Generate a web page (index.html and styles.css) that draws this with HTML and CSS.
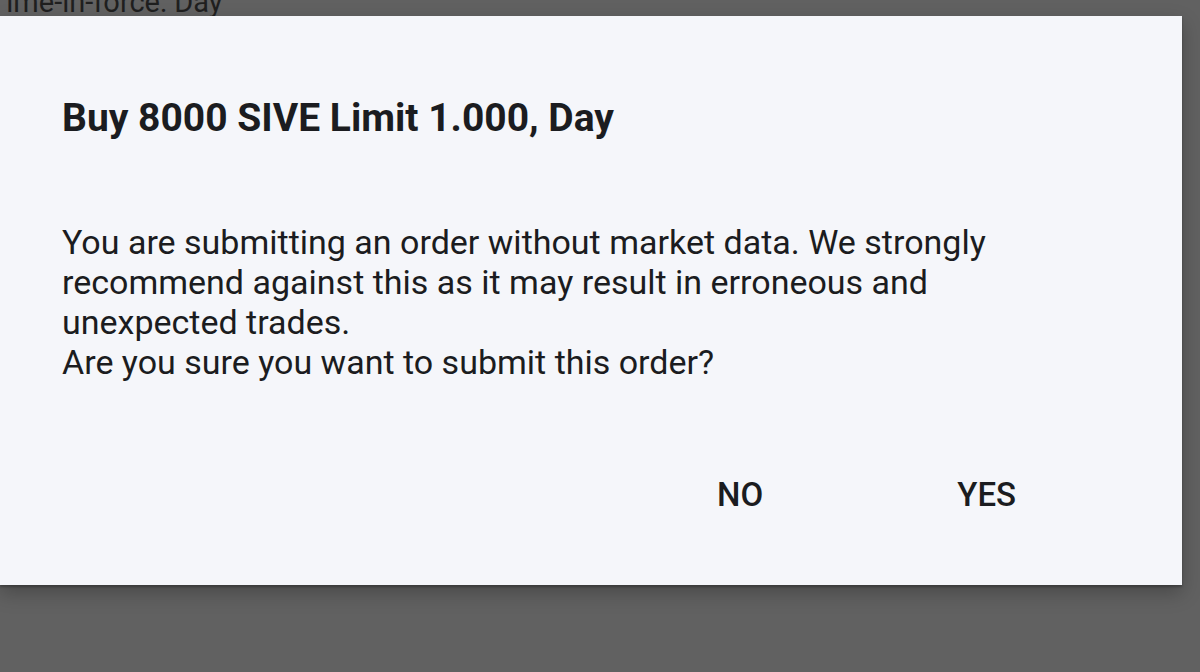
FILE: index.html
```html
<!DOCTYPE html>
<html>
<head>
<meta charset="utf-8">
<link rel="stylesheet" href="styles.css">
</head>
<body>
<div class="page">
  <div class="behind">Time-in-force: Day</div>
  <div class="dialog">
    <h1 class="title">Buy 8000 SIVE Limit 1.000, Day</h1>
    <p class="message">You are submitting an order without market data. We strongly recommend against this as it may result in erroneous and unexpected trades.<br>Are you sure you want to submit this order?</p>
    <div class="actions">
      <button class="btn btn-no">NO</button>
      <button class="btn btn-yes">YES</button>
    </div>
  </div>
</div>
</body>
</html>
```

FILE: styles.css
```css
html, body {
  margin: 0;
  padding: 0;
  width: 1200px;
  height: 672px;
  overflow: hidden;
  background: #616161;
  font-family: Roboto, "Liberation Sans", sans-serif;
}
.page {
  display: flex;
  flex-direction: column;
}
.behind {
  height: 16px;
  margin-left: -11px;
  font-size: 29px;
  line-height: 16px;
  color: #1f1f1f;
  white-space: nowrap;
  position: relative;
  top: -6px;
}
.dialog {
  width: 1182px;
  height: 569px;
  box-sizing: border-box;
  background: #f5f6fa;
  box-shadow: 0 2px 2px rgba(0,0,0,0.25), 0 8px 18px rgba(0,0,0,0.25);
  padding: 0 62px;
  display: flex;
  flex-direction: column;
  position: relative;
}
.title {
  margin: 79px 0 0 0;
  font-size: 39px;
  line-height: 46px;
  font-weight: 700;
  color: #1b1c20;
}
.message {
  margin: 81px 0 0 0;
  font-size: 34px;
  line-height: 40px;
  color: #1b1c20;
  max-width: 1000px;
}
.actions {
  display: flex;
  justify-content: flex-end;
  margin-top: 93px;
  padding-right: 104px;
  gap: 194px;
}
.btn {
  background: none;
  border: none;
  padding: 0;
  font-family: inherit;
  font-size: 33px;
  font-weight: 500;
  color: #1b1c20;
  line-height: 40px;
}
```
